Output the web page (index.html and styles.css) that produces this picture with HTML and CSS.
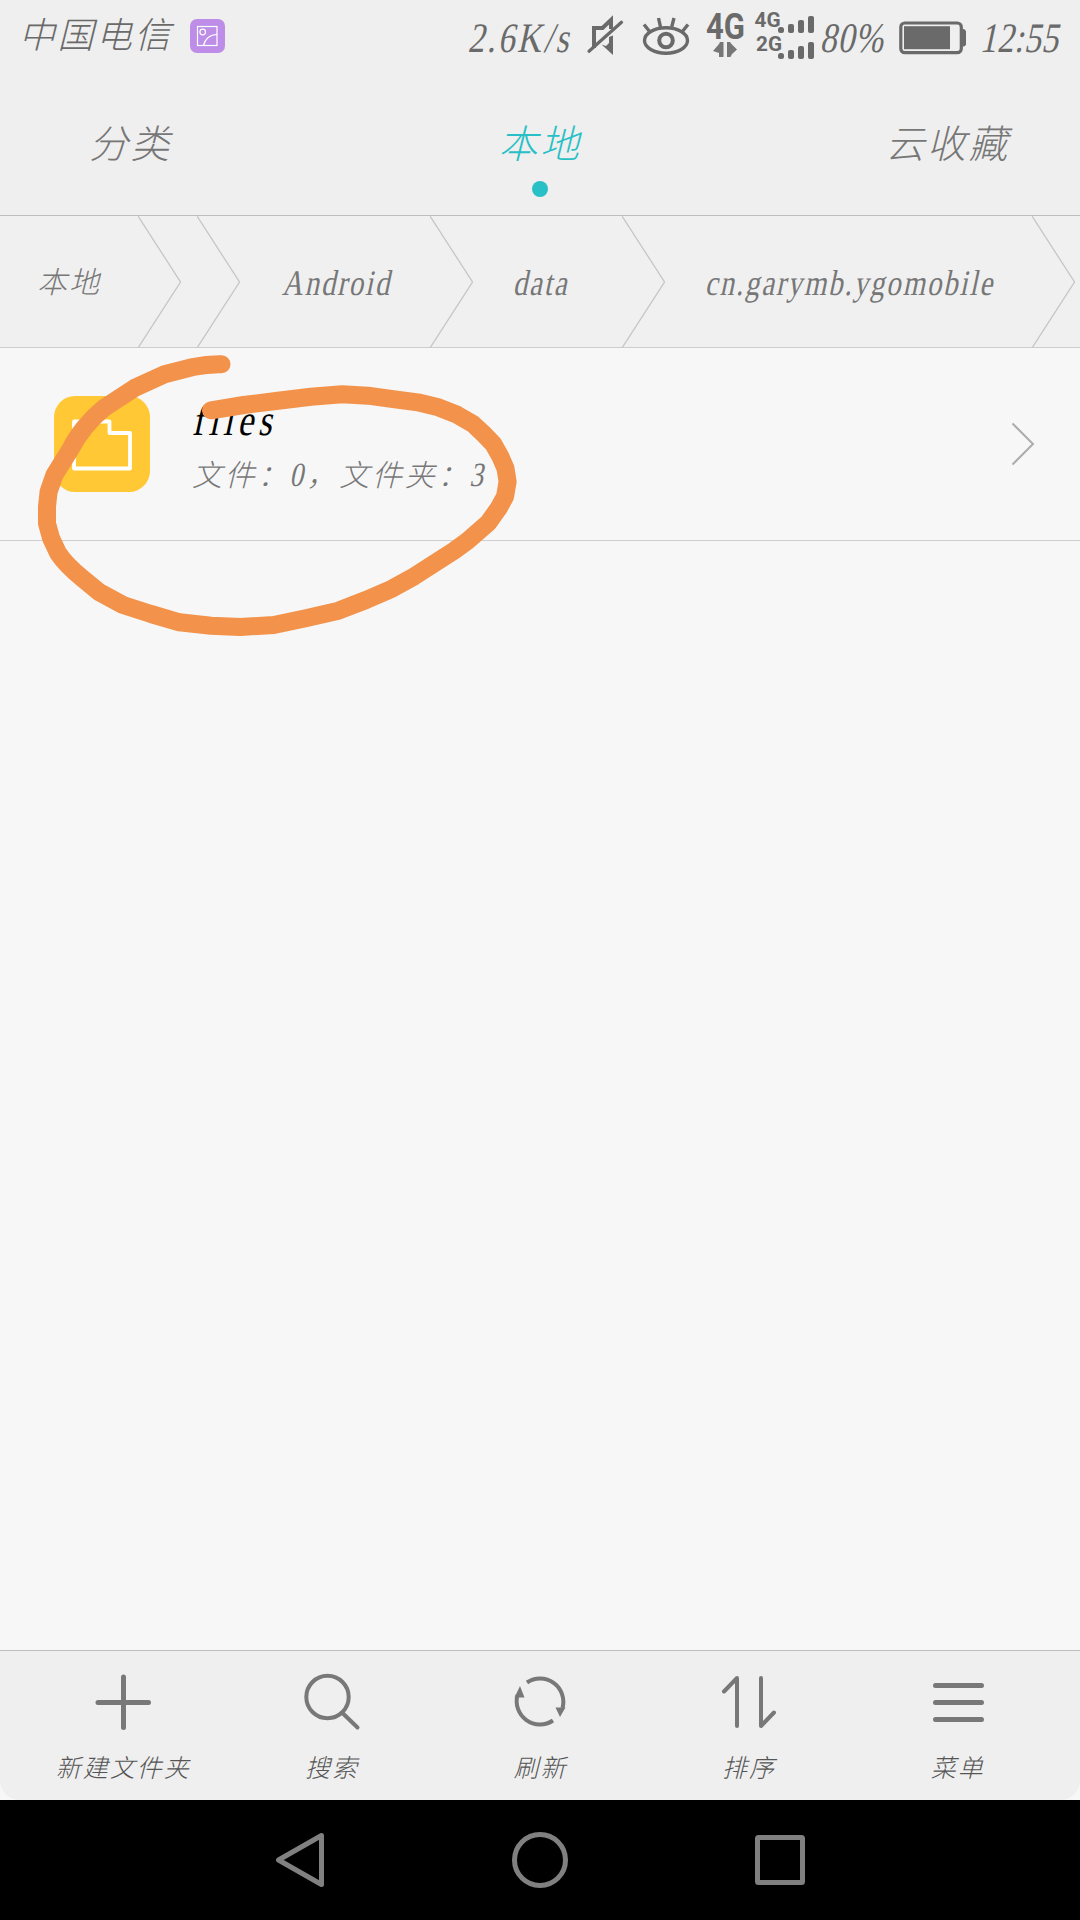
FILE: index.html
```html
<!DOCTYPE html>
<html lang="zh-CN">
<head>
    <meta charset="UTF-8">
    <meta name="viewport" content="width=device-width, initial-scale=1.0">
    <title>文件管理</title>
    <link rel="stylesheet" href="styles.css">
</head>
<body>

<!-- Status bar -->
<div class="status-bar">
    <span class="carrier">中国电信</span>
    <svg class="gallery-icon" width="35" height="34" viewBox="0 0 35 34">
        <rect width="35" height="34" rx="7" fill="#bd8de7"/>
        <g fill="none" stroke="#fff" stroke-width="1.2">
            <rect x="7.5" y="7.5" width="19.5" height="19"/>
            <circle cx="12.7" cy="13" r="2.8"/>
            <path d="M13.5 26.5C15 20 20 15.5 27 15.5"/>
        </g>
    </svg>
    <span class="speed"><span class="narrow">2.6K/s</span></span>
    <svg class="status-icons" width="236" height="75" viewBox="585 0 236 75">
        <!-- mute -->
        <g fill="none" stroke="#6a6a6a" stroke-width="4">
            <path d="M594 48V28H602.5L611 20V29"/>
            <path d="M589 51.3L621.5 22.2" stroke-width="3.2" stroke-linecap="round"/>
        </g>
        <path d="M601.5 44.5L606 46L609 43V37L613 35.5V55Z" fill="#6a6a6a"/>
        <!-- eye -->
        <g fill="none" stroke="#6a6a6a" stroke-width="3.4">
            <ellipse cx="666" cy="40.5" rx="21.5" ry="12.7"/>
            <circle cx="666" cy="40.5" r="6.8" stroke-width="4"/>
            <path d="M644 24.5L650 32M658.5 18L660.5 27M674 18L671.7 27M688 24.5L682 32"/>
        </g>
        <!-- network -->
        <g fill="#6a6a6a" class="net-text">
            <text x="706" y="39" font-size="36" textLength="39" lengthAdjust="spacingAndGlyphs">4G</text>
            <text x="754.5" y="27" font-size="20" textLength="26" lengthAdjust="spacingAndGlyphs">4G</text>
            <text x="756" y="51" font-size="20" textLength="26" lengthAdjust="spacingAndGlyphs">2G</text>
        </g>
        <path d="M713 51L719 44L720 42H723.5V57H719V53ZM737 49.5L731.5 44L730 42H727V57H730.5L732 54Z" fill="#777"/>
        <g fill="#6a6a6a">
            <rect x="778" y="27" width="6" height="6" rx="2.5"/>
            <rect x="788" y="24" width="6" height="9" rx="2"/>
            <rect x="798" y="20" width="6" height="13" rx="2"/>
            <rect x="808" y="16" width="6" height="17" rx="2"/>
            <rect x="778" y="53" width="6" height="6" rx="2.5"/>
            <rect x="788" y="50" width="6" height="9" rx="2"/>
            <rect x="798" y="46" width="6" height="13" rx="2"/>
            <rect x="808" y="42" width="6" height="17" rx="2"/>
        </g>
    </svg>
    <span class="percent"><span class="narrow">80%</span></span>
    <svg class="battery" width="68" height="34" viewBox="0 0 68 34">
        <rect x="1.8" y="2" width="60.5" height="29.7" rx="4" fill="none" stroke="#6a6a6a" stroke-width="3.2"/>
        <rect x="5" y="5.2" width="46" height="23" fill="#6a6a6a"/>
        <path d="M63 8H65L67 10V24L65 25.5H63Z" fill="#6a6a6a"/>
    </svg>
    <span class="clock"><span class="narrow">12:55</span></span>
</div>

<!-- Tabs -->
<div class="tabs">
    <div class="tab">分类</div>
    <div class="tab active">本地<span class="dot"></span></div>
    <div class="tab">云收藏</div>
</div>

<!-- Path -->
<div class="breadcrumb">
    <div class="crumb crumb-root">本地</div>
    <svg class="sep" viewBox="0 0 43 132"><path d="M0 0L42.5 66L0 132"/></svg>
    <div class="crumb crumb-empty"></div>
    <svg class="sep" viewBox="0 0 43 132"><path d="M0 0L42.5 66L0 132"/></svg>
    <div class="crumb crumb-android"><span class="narrow">Android</span></div>
    <svg class="sep" viewBox="0 0 43 132"><path d="M0 0L42.5 66L0 132"/></svg>
    <div class="crumb crumb-data"><span class="narrow">data</span></div>
    <svg class="sep" viewBox="0 0 43 132"><path d="M0 0L42.5 66L0 132"/></svg>
    <div class="crumb crumb-package"><span class="narrow">cn.garymb.ygomobile</span></div>
    <svg class="sep" viewBox="0 0 43 132"><path d="M0 0L42.5 66L0 132"/></svg>
</div>

<!-- File list -->
<div class="file-list">
    <div class="file-row">
        <svg class="folder" width="96" height="96" viewBox="0 0 96 96">
            <rect width="96" height="96" rx="21" fill="#ffc834"/>
            <path d="M20 25.5H55.5V37H76V72.5H20Z" fill="none" stroke="#fff" stroke-width="3.8" stroke-linejoin="round"/>
        </svg>
        <div class="file-info">
            <div class="file-name"><span class="narrow">files</span></div>
            <div class="file-meta">文件：<span class="narrow num">0</span>，文件夹：<span class="narrow num">3</span></div>
        </div>
        <svg class="arrow" width="24" height="44" viewBox="0 0 24 44">
            <path d="M1.5 1.5L22 22L1.5 42.5" fill="none" stroke="#adadad" stroke-width="2"/>
        </svg>
    </div>
</div>

<!-- Toolbar -->
<div class="toolbar">
    <div class="tool">
        <svg viewBox="0 0 60 60"><path d="M30.5 4V54.5M5 29.5H55.5" stroke-width="5"/></svg>
        <span>新建文件夹</span>
    </div>
    <div class="tool">
        <svg viewBox="0 0 60 60"><circle cx="25.5" cy="24" r="21.2"/><path d="M41 40.5L55.5 54.5"/></svg>
        <span>搜索</span>
    </div>
    <div class="tool">
        <svg viewBox="0 0 60 60">
            <path d="M17 9.5A23.3 23.3 0 0 1 52.5 35M43 47.5A23.3 23.3 0 0 1 7.5 22" stroke-linecap="butt"/>
            <path d="M4.5 24.5H14.5L10 13Z M45.5 34.5H55.5L50 44Z" class="solid"/>
        </svg>
        <span>刷新</span>
    </div>
    <div class="tool">
        <svg viewBox="0 0 60 60"><path d="M18 53V5L5 18.5M42 5V53L55 39.5"/></svg>
        <span>排序</span>
    </div>
    <div class="tool">
        <svg viewBox="0 0 60 60"><path d="M7.5 12.5H53.5M7.5 29.5H53.5M7.5 46.5H53.5" stroke-width="5"/></svg>
        <span>菜单</span>
    </div>
</div>

<!-- Navigation keys -->
<div class="nav-bar">
    <svg viewBox="0 0 60 60"><path d="M8.5 30L51.5 5.5V54.5Z"/></svg>
    <svg viewBox="0 0 60 60"><circle cx="30" cy="30" r="25.5"/></svg>
    <svg viewBox="0 0 60 60"><rect x="7.5" y="7.5" width="45" height="45" rx="1"/></svg>
</div>

<!-- Pen mark over the folder -->
<svg class="pen-mark" width="540" height="300" viewBox="0 340 540 300">
    <path d="M221.5 364.3Q208 364 193 367L164.6 374.3L135 387.7L104 408Q94 416 85 427Q76 438 70 450L54.4 475L48.6 491.7L47 506.7V523.3L51 538L58 553Q66 565 82 578L99 592L123 605L151 614L179.4 622.3L211 625.7L240.4 627L273.8 625L305.8 618.3L338.5 610.7L366 600L392 588.7L414.3 576.3L454 550.7L467.7 540.7L488.3 522.7L498.6 508.3L505 496.7L507.6 481.7L505.5 468.3L500.4 456.7L493.5 444.3L483 433.3L473 424L457 414.7L438.4 407.3L417.7 402.3L395 399.3L367.8 395.7L342 394.3L311 396.7L278 400.7L243.8 405L211 410.3"/>
</svg>

</body>
</html>
```

FILE: styles.css
```css
* {
    box-sizing: border-box;
}
body {
    margin: 0;
    width: 1080px;
    height: 1920px;
    display: flex;
    flex-direction: column;
    position: relative;
    overflow: hidden;
    background-color: #f7f7f7;
    font-family: "Liberation Serif", "Noto Sans CJK SC", serif;
    font-style: italic;
    font-weight: 300;
    color: #777;
    white-space: nowrap;
}
svg {
    display: block;
    flex: none;
}
/* condensed latin text, slanted from the upright face */
.narrow {
    display: inline-block;
    font-style: normal;
    transform: skewX(-12deg) scaleX(0.8);
    transform-origin: left 75%;
}

/* Status bar */
.status-bar {
    height: 75px;
    display: flex;
    align-items: center;
    background-color: #efefef;
    font-size: 42px;
    color: #6a6a6a;
}
.carrier {
    width: 171px;
    margin-left: 19px;
    margin-top: -12px;
    font-size: 36px;
    letter-spacing: 2.5px;
}
.gallery-icon {
    margin-top: -3px;
}
.speed {
    width: 117px;
    margin-left: 243px;
}
.speed .narrow {
    letter-spacing: 3px;
}
.net-text {
    font-family: Roboto, sans-serif;
    font-style: normal;
    font-weight: 700;
}
.percent {
    width: 78px;
}
.percent .narrow {
    margin-left: -1px;
    letter-spacing: 1px;
}
.clock {
    margin-left: 13px;
}
.clock .narrow {
    letter-spacing: 0.5px;
}

/* Tabs */
.tabs {
    height: 141px;
    padding: 0 70px;
    display: grid;
    grid-template-columns: 1fr auto 1fr;
    background-color: #efefef;
    border-bottom: 1px solid #bdbdbd;
    font-size: 39px;
    letter-spacing: 2.5px;
    line-height: 140px;
}
.tab {
    position: relative;
    padding-left: 19px;
}
.tab.active {
    padding-left: 0;
    color: #28c0c6;
}
.tab:last-child {
    text-align: right;
}
.dot {
    position: absolute;
    left: 50%;
    top: 106px;
    width: 16px;
    height: 16px;
    margin-left: -8px;
    border-radius: 50%;
    background-color: #28c0c6;
}

/* Path */
.breadcrumb {
    height: 132px;
    display: flex;
    align-items: center;
    background-color: #f0f0f0;
    border-bottom: 1px solid #cdcdcd;
}
.crumb {
    padding-top: 2px;
    font-size: 36px;
    letter-spacing: 2.4px;
}
.crumb-root {
    width: 138px;
    padding-top: 0;
    padding-bottom: 3px;
    padding-left: 37px;
    font-size: 30px;
    letter-spacing: 2px;
}
.crumb-empty {
    width: 16px;
}
.crumb-android {
    width: 190px;
    padding-left: 42px;
}
.crumb-data {
    width: 149px;
    padding-left: 40px;
}
.crumb-package {
    width: 367px;
    padding-left: 40px;
}
.sep {
    width: 43px;
    height: 132px;
}
.sep path {
    fill: none;
    stroke: #c6c6c6;
    stroke-width: 1.3;
}

/* File list */
.file-list {
    flex: 1;
}
.file-row {
    height: 193px;
    padding: 0 45px 0 54px;
    display: flex;
    align-items: center;
    border-bottom: 1px solid #cfcfcf;
}
.file-info {
    flex: 1;
    margin-left: 42px;
    padding-top: 8px;
}
.file-name {
    font-size: 44px;
    line-height: 50px;
    letter-spacing: 6px;
    color: #000;
}
.file-meta {
    margin-top: 5px;
    font-size: 30px;
    line-height: 48px;
    letter-spacing: 2.8px;
}
.num {
    margin-left: -1px;
    font-size: 34px;
    letter-spacing: 0;
}

/* Toolbar */
.toolbar {
    height: 150px;
    padding: 0 18px 0 19px;
    display: flex;
    border-top: 1px solid #bdbdbd;
    border-radius: 0 0 20px 20px;
    background-color: #efefef;
}
.tool {
    flex: 1;
    display: flex;
    flex-direction: column;
    align-items: center;
    padding-top: 22px;
    font-size: 25px;
    letter-spacing: 2px;
    color: #555;
}
.tool svg {
    width: 60px;
    height: 60px;
    fill: none;
    stroke: #787878;
    stroke-width: 4;
    stroke-linecap: round;
    stroke-linejoin: round;
}
.tool .solid {
    fill: #787878;
    stroke: none;
}
.tool span {
    margin-top: 18px;
    line-height: 36px;
}

/* Navigation keys */
.nav-bar {
    height: 120px;
    padding: 0 270px;
    display: flex;
    justify-content: space-between;
    align-items: center;
    background-color: #000;
}
.nav-bar svg {
    width: 60px;
    height: 60px;
    fill: none;
    stroke: #808080;
    stroke-width: 5;
    stroke-linejoin: round;
}

/* Pen mark */
.pen-mark {
    position: absolute;
    left: 0;
    top: 340px;
}
.pen-mark path {
    fill: none;
    stroke: #f3924a;
    stroke-width: 18;
    stroke-linecap: round;
    stroke-linejoin: round;
}
```
